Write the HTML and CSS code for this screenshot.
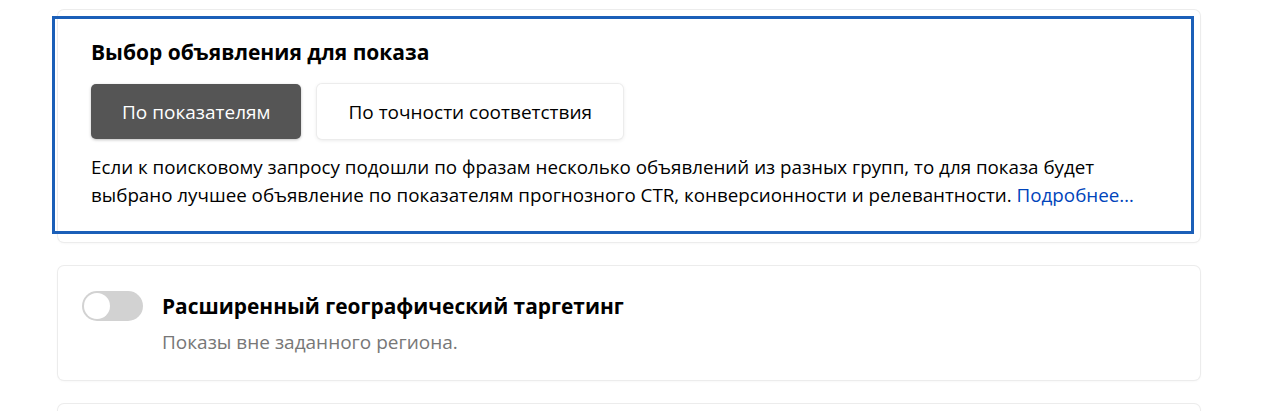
FILE: index.html
```html
<!DOCTYPE html>
<html lang="ru">
<head>
<meta charset="utf-8">
<link rel="stylesheet" href="styles.css">
</head>
<body>
<div class="page">
  <section class="card card-choice">
    <h2 class="title">Выбор объявления для показа</h2>
    <div class="segments">
      <button class="seg seg-active">По показателям</button>
      <button class="seg">По точности соответствия</button>
    </div>
    <p class="desc">Если к поисковому запросу подошли по фразам несколько объявлений из разных групп, то для показа будет выбрано лучшее объявление по показателям прогнозного CTR, конверсионности и релевантности. <a class="link" href="#">Подробнее…</a></p>
    <div class="focus-ring"></div>
  </section>
  <section class="card card-geo">
    <span class="toggle"><span class="knob"></span></span>
    <div class="geo-text">
      <div class="geo-title">Расширенный географический таргетинг</div>
      <div class="geo-sub">Показы вне заданного региона.</div>
    </div>
  </section>
  <section class="card card-next"></section>
</div>
</body>
</html>
```
FILE: styles.css
```css
* { box-sizing: border-box; }
html, body { margin: 0; padding: 0; background: #fff; }
body { font-family: "Open Sans", "Liberation Sans", sans-serif; color: #000; overflow: hidden; height: 411px; }
.page { padding: 10px 0 0 58px; width: 1200px; display: flex; flex-direction: column; gap: 24px; }
.card { position: relative; width: 1142px; background: #fff; border-radius: 6px; box-shadow: 0 0 0 1px #ececec, 0 1px 3px rgba(0,0,0,0.06); }
.card-choice { padding: 30px 33px 33px; }
.title { margin: 0; font-size: 21px; line-height: 24px; font-weight: 700; }
.segments { display: flex; gap: 16px; margin-top: 20px; }
.seg { height: 55px; padding: 0 31px; border: none; border-radius: 5px; background: #fff; color: #000; font-family: inherit; font-size: 19px; box-shadow: 0 0 0 1px #ececec, 0 1px 4px rgba(0,0,0,0.12); }
.seg-active { background: #555; color: #fff; box-shadow: 0 1px 3px rgba(0,0,0,0.25); }
.desc { margin: 14px 0 0; font-size: 18.8px; line-height: 28px; }
.link { color: #0044bb; text-decoration: none; }
.focus-ring { position: absolute; left: -6px; top: 6px; width: 1142px; height: 218px; border: 3px solid #1b5fb8; pointer-events: none; }
.card-geo { display: flex; gap: 19px; padding: 25px 24px 26px; }
.toggle { position: relative; flex: none; width: 61px; height: 30px; border-radius: 15px; background: #d2d2d2; }
.knob { position: absolute; left: 2px; top: 2px; width: 26px; height: 26px; border-radius: 50%; background: #fff; }
.geo-title { font-size: 20.9px; line-height: 30px; font-weight: 700; }
.geo-sub { margin-top: 9px; font-size: 19px; line-height: 24px; color: #777; }
.card-next { height: 60px; }
```
